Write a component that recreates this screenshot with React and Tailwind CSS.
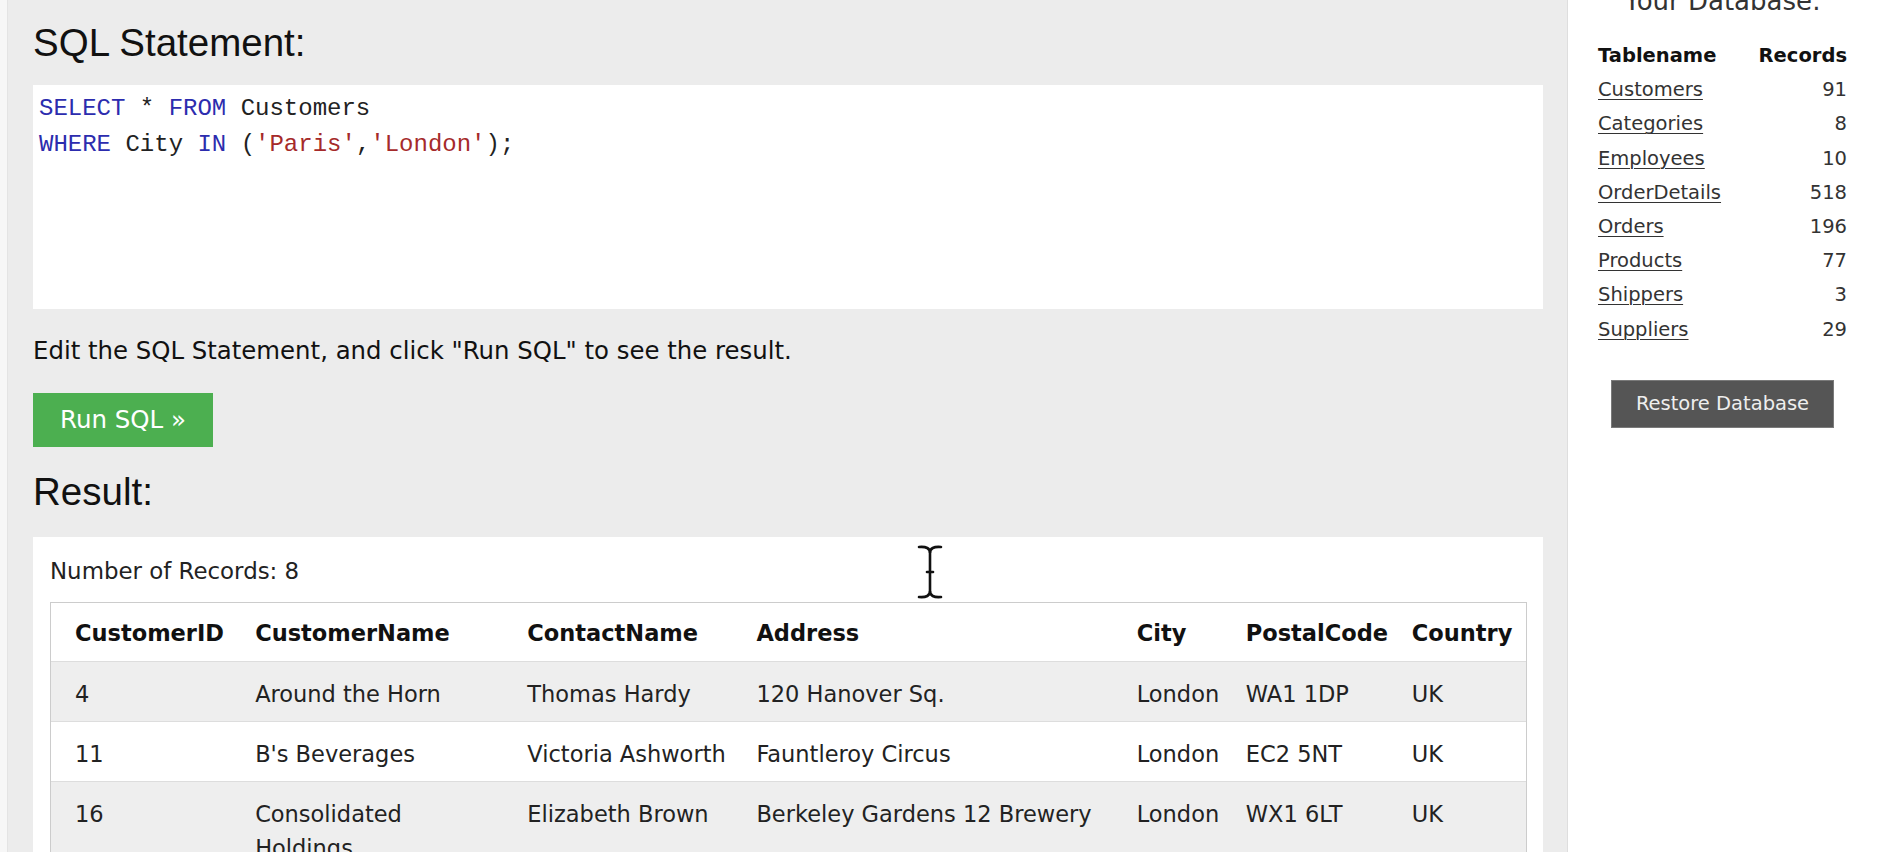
import React from "react";

const rows = [
  ["4", "Around the Horn", "Thomas Hardy", "120 Hanover Sq.", "London", "WA1 1DP", "UK"],
  ["11", "B's Beverages", "Victoria Ashworth", "Fauntleroy Circus", "London", "EC2 5NT", "UK"],
  ["16", "Consolidated Holdings", "Elizabeth Brown", "Berkeley Gardens 12 Brewery", "London", "WX1 6LT", "UK"],
  ["19", "Eastern Connection", "Ann Devon", "35 King George", "London", "WX3 6FW", "UK"],
];

const heads = ["CustomerID", "CustomerName", "ContactName", "Address", "City", "PostalCode", "Country"];

const dbTables = [
  ["Customers", "91"],
  ["Categories", "8"],
  ["Employees", "10"],
  ["OrderDetails", "518"],
  ["Orders", "196"],
  ["Products", "77"],
  ["Shippers", "3"],
  ["Suppliers", "29"],
];

function IBeam() {
  return (
    <svg
      className="absolute left-[916px] top-[544px]"
      width="28"
      height="56"
      viewBox="0 0 28 56"
      fill="none"
    >
      <g stroke="#ffffff" strokeWidth="5" strokeLinecap="round">
        <path d="M3 3 Q14 2 14 9 Q14 2 25 3" />
        <path d="M14 9 V47" />
        <path d="M3 53 Q14 54 14 47 Q14 54 25 53" />
      </g>
      <g stroke="#111111" strokeWidth="2.6" strokeLinecap="round">
        <path d="M3 3 Q14 2 14 9 Q14 2 25 3" />
        <path d="M14 9 V47" />
        <path d="M3 53 Q14 54 14 47 Q14 54 25 53" />
        <path d="M11 28 H17" />
      </g>
    </svg>
  );
}

export default function App() {
  return (
    <div className="relative flex w-[1887px] h-[852px] overflow-hidden bg-white font-['DejaVu_Sans',Verdana,sans-serif]">
      {/* left strip */}
      <div className="w-[8px] shrink-0 bg-[#f7f7f7] border-r border-[#e4e4e4]" />

      {/* main gray panel */}
      <div className="w-[1560px] shrink-0 bg-[#ececec] border-r border-[#dedede] pl-[25px] pr-[24px] pt-[21px]">
        <h2 className="text-[38.5px] leading-[44px] text-[#111] font-['Liberation_Sans',Arial,sans-serif] font-normal">
          SQL Statement:
        </h2>

        <div className="mt-[20px] h-[224px] bg-white pt-[6px] pl-[6px] font-['Liberation_Mono','Courier_New',monospace] text-[24px] leading-[36px] text-[#222]">
          <div>
            <span className="text-[#2c2cae]">SELECT</span> * <span className="text-[#2c2cae]">FROM</span> Customers
          </div>
          <div>
            <span className="text-[#2c2cae]">WHERE</span> City <span className="text-[#2c2cae]">IN</span> (
            <span className="text-[#a52a2a]">'Paris'</span>,<span className="text-[#a52a2a]">'London'</span>);
          </div>
        </div>

        <p className="mt-[24px] text-[24.4px] leading-[35px] text-[#111]">
          Edit the SQL Statement, and click "Run SQL" to see the result.
        </p>

        <button className="mt-[25px] h-[54px] w-[180px] bg-[#4caf50] text-white text-[24.5px] flex items-center justify-center">
          Run SQL »
        </button>

        <h2 className="mt-[23px] text-[38.5px] leading-[44px] text-[#111] font-['Liberation_Sans',Arial,sans-serif] font-normal">
          Result:
        </h2>

        <div className="mt-[23px] h-[400px] bg-white pt-[17px] pl-[17px] pr-[16px]">
          <div className="text-[22.9px] leading-[34px] text-[#222]">Number of Records: 8</div>
          <div className="mt-[14px] border border-[#cccccc]">
            <table className="w-full table-fixed border-collapse text-[22.5px] leading-[34px] text-[#222]">
              <colgroup>
                <col className="w-[192px]" />
                <col className="w-[272px]" />
                <col className="w-[229px]" />
                <col className="w-[380px]" />
                <col className="w-[109px]" />
                <col className="w-[166px]" />
                <col className="w-[126px]" />
              </colgroup>
              <thead>
                <tr className="border-b border-[#dddddd] bg-white">
                  {heads.map((h, i) => (
                    <th
                      key={h}
                      className={`${i === 0 ? "pl-[24px]" : "pl-[12px]"} pr-[4px] pt-[13px] pb-[11px] text-left font-bold whitespace-nowrap text-[#111]`}
                    >
                      {h}
                    </th>
                  ))}
                </tr>
              </thead>
              <tbody>
                {rows.map((r, ri) => (
                  <tr
                    key={ri}
                    className={`border-b border-[#dddddd] ${ri % 2 === 0 ? "bg-[#eeeeee]" : "bg-white"}`}
                  >
                    {r.map((c, ci) => (
                      <td
                        key={ci}
                        className={`${ci === 0 ? "pl-[24px]" : "pl-[12px]"} pr-[12px] pt-[15px] pb-[10px] align-top`}
                      >
                        {c}
                      </td>
                    ))}
                  </tr>
                ))}
              </tbody>
            </table>
          </div>
        </div>
      </div>

      {/* right panel */}
      <div className="flex-1 bg-white pr-[10px] flex flex-col items-center">
        <h3 className="mt-[-14px] text-[26px] leading-[30px] text-[#333] font-normal whitespace-nowrap">
          Your Database:
        </h3>
        <div className="mt-[23px] w-[249px] text-[19.5px] leading-[34.2px]">
          <div className="flex justify-between font-bold text-[#111]">
            <span>Tablename</span>
            <span>Records</span>
          </div>
          {dbTables.map(([n, c]) => (
            <div key={n} className="flex justify-between text-[#333]">
              <span className="underline underline-offset-[3px] decoration-[1px]">{n}</span>
              <span>{c}</span>
            </div>
          ))}
        </div>
        <button className="mt-[33px] h-[48px] w-[223px] shrink-0 bg-[#555555] border border-[#7a7a7a] text-[#eeeeee] text-[19.5px] flex items-center justify-center">
          Restore Database
        </button>
      </div>

      <IBeam />
    </div>
  );
}
